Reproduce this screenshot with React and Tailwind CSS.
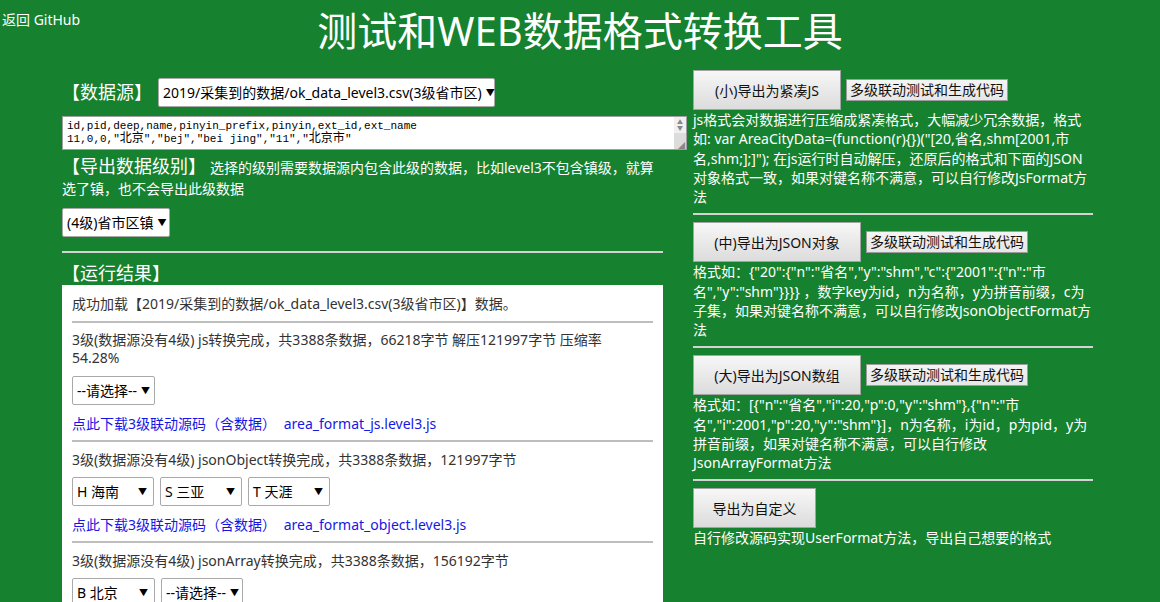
import React from 'react';

const FONT = "font-['Noto_Sans','Noto_Sans_CJK_SC',sans-serif]";

const Select = ({ label, className = '' }) => (
  <div
    className={`flex items-center justify-between h-[29px] bg-white border border-[#a9a9a9] rounded-[2px] pl-[4px] pr-[6px] text-[14px] text-black ${className}`}
  >
    <span className="whitespace-nowrap">{label}</span>
    <span className="text-[9px] leading-none ml-[4px]">▼</span>
  </div>
);

const BigButton = ({ children, className = '' }) => (
  <button
    className={`h-[40px] bg-linear-to-b from-[#f7f7f7] to-[#dcdcdc] border border-[#a3a3a3] text-[14px] text-[#111] ${className}`}
  >
    {children}
  </button>
);

const SmallButton = () => (
  <button className="w-[162px] h-[22px] bg-linear-to-b from-[#f4f4f4] to-[#e6e6e6] border border-[#9c9c9c] text-[14px] leading-none text-[#111]">
    多级联动测试和生成代码
  </button>
);

const Rule = ({ className = '' }) => <div className={`border-t-2 border-[#d3d3d3] ${className}`} />;
const InnerRule = ({ className = '' }) => <div className={`border-t-2 border-[#bdbdbd] ${className}`} />;

const DownloadLink = ({ file }) => (
  <div className="mt-[10px] text-[#1616e6]">
    点此下载3级联动源码（含数据） <span className="ml-[4px]">{file}</span>
  </div>
);

const ExportBlock = ({ title, width, showTest = true, children }) => (
  <div>
    <div className="flex items-center gap-[5px]">
      <BigButton className={width}>{title}</BigButton>
      {showTest && <SmallButton />}
    </div>
    <p className="text-[14px] leading-[19.25px] text-white">{children}</p>
  </div>
);

export default function App() {
  return (
    <div className={`min-h-screen bg-[#16822f] text-white ${FONT}`}>
      {/* header */}
      <div className="grid grid-cols-[1fr_auto_1fr] h-[70px]">
        <a className="justify-self-start pl-[2px] pt-[10px] text-[14px] leading-[20px] text-white">返回 GitHub</a>
        <h1 className="pt-[4px] text-[40px] leading-[54px] font-normal text-white">测试和WEB数据格式转换工具</h1>
        <div />
      </div>

      <div className="flex">
        {/* left column */}
        <div className="ml-[62px] w-[601px] pt-[8px]">
          <div className="flex items-center h-[29px]">
            <span className="text-[18px] leading-[29px]">【数据源】</span>
            <Select className="ml-[6px] w-[337px] pr-[10px]" label="2019/采集到的数据/ok_data_level3.csv(3级省市区)" />
          </div>

          <div className="mt-[9px] flex h-[34px] w-[625px] bg-white border border-[#a0a0a0] text-black overflow-hidden">
            <div className="flex-1 pl-[4px] pt-[3px] font-['Liberation_Mono','Noto_Sans_CJK_SC',monospace] text-[11px] leading-[13px] whitespace-nowrap">
              <div>id,pid,deep,name,pinyin_prefix,pinyin,ext_id,ext_name</div>
              <div>
                11,0,0,"<span className="text-[12px]">北京</span>","bej","bei jing","11","<span className="text-[12px]">北京市</span>"
              </div>
            </div>
            <div className="w-[12px] flex flex-col">
              <div className="h-[16px] bg-[#f0f0f0] flex flex-col items-center justify-center text-[6px] leading-[6px] text-[#888]">
                <span>▲</span>
                <span>▼</span>
              </div>
              <div className="flex-1 bg-[#dcdcdc] flex items-end justify-end pr-[1px] text-[7px] leading-none text-[#888]">◢</div>
            </div>
          </div>

          <p className="mt-[6px] leading-[21px]">
            <span className="text-[18px]">【导出数据级别】</span>
            <span className="text-[14px] ml-[4px]">选择的级别需要数据源内包含此级的数据，比如level3不包含镇级，就算选了镇，也不会导出此级数据</span>
          </p>

          <Select className="mt-[9px] w-[108px] pl-[2px]" label="(4级)省市区镇" />

          <Rule className="mt-[14px]" />

          <div className="mt-[10px] text-[18px] leading-[21px]">【运行结果】</div>

          <div className="mt-[1px] bg-white px-[10px] pt-[10px] pb-[20px] text-[14px] leading-[18px] text-[#333]">
            <div>成功加载【2019/采集到的数据/ok_data_level3.csv(3级省市区)】数据。</div>
            <InnerRule className="mt-[8px]" />

            <div className="mt-[8px]">
              3级(数据源没有4级) js转换完成，共3388条数据，66218字节 解压121997字节 压缩率
              <br />
              54.28%
            </div>
            <div className="mt-[9px] flex">
              <Select className="w-[83px]" label="--请选择--" />
            </div>
            <DownloadLink file="area_format_js.level3.js" />
            <InnerRule className="mt-[7px]" />

            <div className="mt-[9px]">3级(数据源没有4级) jsonObject转换完成，共3388条数据，121997字节</div>
            <div className="mt-[8px] flex gap-[6px]">
              <Select className="w-[82px]" label="H 海南" />
              <Select className="w-[82px]" label="S 三亚" />
              <Select className="w-[82px]" label="T 天涯" />
            </div>
            <DownloadLink file="area_format_object.level3.js" />
            <InnerRule className="mt-[7px]" />

            <div className="mt-[9px]">3级(数据源没有4级) jsonArray转换完成，共3388条数据，156192字节</div>
            <div className="mt-[8px] flex gap-[6px]">
              <Select className="w-[83px]" label="B 北京" />
              <Select className="w-[82px]" label="--请选择--" />
            </div>
            <DownloadLink file="area_format_array.level3.js" />
          </div>
        </div>

        {/* right column */}
        <div className="ml-[30px] w-[400px]">
          <ExportBlock title="(小)导出为紧凑JS" width="w-[148px]">
            js格式会对数据进行压缩成紧凑格式，大幅减少冗余数据，格式如: var AreaCityData=(function(r){'{}'})("[20,省名,shm[2001,市名,shm;];]"); 在js运行时自动解压，还原后的格式和下面的JSON对象格式一致，如果对键名称不满意，可以自行修改JsFormat方法
          </ExportBlock>
          <Rule className="mt-[7px]" />

          <div className="mt-[7px]">
            <ExportBlock title="(中)导出为JSON对象" width="w-[168px]">
              格式如：{'{"20":{"n":"省名","y":"shm","c":{"2001":{"n":"市名","y":"shm"}}}}'} ，数字key为id，n为名称，y为拼音前缀，c为子集，如果对键名称不满意，可以自行修改JsonObjectFormat方法
            </ExportBlock>
          </div>
          <Rule className="mt-[7px]" />

          <div className="mt-[7px]">
            <ExportBlock title="(大)导出为JSON数组" width="w-[168px]">
              格式如：{'[{"n":"省名","i":20,"p":0,"y":"shm"},{"n":"市名","i":2001,"p":20,"y":"shm"}]'}，n为名称，i为id，p为pid，y为拼音前缀，如果对键名称不满意，可以自行修改JsonArrayFormat方法
            </ExportBlock>
          </div>
          <Rule className="mt-[7px]" />

          <div className="mt-[7px]">
            <ExportBlock title="导出为自定义" width="w-[123px]" showTest={false}>
              自行修改源码实现UserFormat方法，导出自己想要的格式
            </ExportBlock>
          </div>
        </div>
      </div>
    </div>
  );
}
